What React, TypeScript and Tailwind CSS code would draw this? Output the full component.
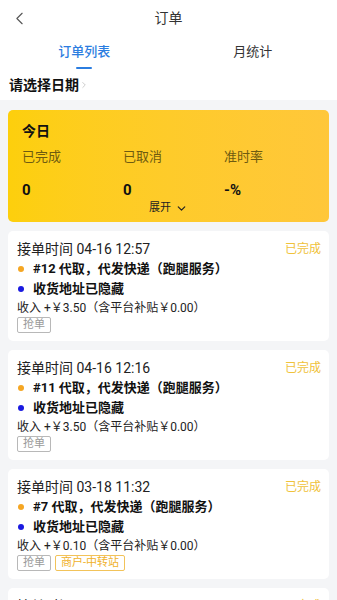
import { ChevronLeft, ChevronRight, ChevronDown } from "lucide-react";

interface Order {
  time: string;
  no: string;
  income: string;
  tags: { label: string; tone: "gray" | "amber" }[];
}

const orders: Order[] = [
  { time: "04-16 12:57", no: "#12", income: "3.50", tags: [{ label: "抢单", tone: "gray" }] },
  { time: "04-16 12:16", no: "#11", income: "3.50", tags: [{ label: "抢单", tone: "gray" }] },
  {
    time: "03-18 11:32",
    no: "#7",
    income: "0.10",
    tags: [
      { label: "抢单", tone: "gray" },
      { label: "商户-中转站", tone: "amber" },
    ],
  },
  { time: "03-18 10:05", no: "#6", income: "3.50", tags: [{ label: "抢单", tone: "gray" }] },
];

const OrderCard = ({ order }: { order: Order }) => (
  <div className="bg-white rounded-[5px] pl-[9px] pr-[8px] pt-[9px] pb-[8px]">
    <div className="flex items-center justify-between h-[18px]">
      <span className="text-[14px] text-[#222]">接单时间 {order.time}</span>
      <span className="text-[12px] text-[#f0c23a]">已完成</span>
    </div>
    <div className="flex items-center h-[20px] mt-[1px]">
      <span className="w-[6px] h-[6px] rounded-full bg-[#f5a623] ml-[1px] mr-[9px]" />
      <span className="text-[13px] font-bold text-[#111]">{order.no} 代取，代发快递（跑腿服务）</span>
    </div>
    <div className="flex items-center h-[20px]">
      <span className="w-[6px] h-[6px] rounded-full bg-[#1a1ae0] ml-[1px] mr-[9px]" />
      <span className="text-[13px] font-bold text-[#111]">收货地址已隐藏</span>
    </div>
    <div className="text-[12px] text-[#222] h-[18px] flex items-center">
      收入 +￥{order.income}（含平台补贴￥0.00）
    </div>
    <div className="flex gap-[4px]">
      {order.tags.map((tag) => (
        <span
          key={tag.label}
          className={
            tag.tone === "gray"
              ? "h-[16px] px-[5px] border border-[#b8b8b8] rounded-[2px] text-[11px] leading-[14px] text-[#9a9a9a]"
              : "h-[16px] px-[5px] border border-[#f2c35a] rounded-[2px] text-[11px] leading-[14px] text-[#f0b12a]"
          }
        >
          {tag.label}
        </span>
      ))}
    </div>
  </div>
);

export default function App() {
  return (
    <div
      className="w-[337px] h-[600px] overflow-hidden bg-[#f4f5f7]"
      style={{ fontFamily: 'Roboto, "Noto Sans CJK SC", sans-serif' }}
    >
      {/* header */}
      <div className="bg-white">
        <div className="relative h-[36px] flex items-center justify-center">
          <ChevronLeft className="absolute left-[9px] top-[8px] w-[21px] h-[21px] text-[#555]" strokeWidth={1.3} />
          <span className="text-[14px] text-[#333]">订单</span>
        </div>
        <div className="grid grid-cols-2 h-[36px]">
          <div className="flex flex-col items-center pt-[7px]">
            <span className="text-[13px] font-medium text-[#2b7de0] leading-[18px]">订单列表</span>
            <span className="mt-[6px] w-[16px] h-[2px] rounded-full bg-[#2b7de0]" />
          </div>
          <div className="flex flex-col items-center pt-[7px]">
            <span className="text-[13px] text-[#333] leading-[18px]">月统计</span>
          </div>
        </div>
        <div className="h-[28px] flex items-center pl-[9px] pb-[2px]">
          <span className="text-[14px] font-bold text-[#111]">请选择日期</span>
          <ChevronRight className="w-[10px] h-[10px] text-[#c4c4c4]" strokeWidth={2} />
        </div>
      </div>

      {/* content */}
      <div className="px-[8px] pt-[10px] flex flex-col gap-[9px]">
        <div className="rounded-[5px] bg-gradient-to-r from-[#fdcf0c] to-[#ffc73a] pl-[14px] pr-[4px] pt-[12px] h-[112px]">
          <div className="text-[14px] font-bold text-[#111] leading-[18px]">今日</div>
          <div className="grid grid-cols-[101px_101px_1fr] mt-[8px]">
            <span className="text-[13px] text-[#6e5b10] leading-[18px]">已完成</span>
            <span className="text-[13px] text-[#6e5b10] leading-[18px]">已取消</span>
            <span className="text-[13px] text-[#6e5b10] leading-[18px]">准时率</span>
          </div>
          <div className="grid grid-cols-[101px_101px_1fr] mt-[15px]">
            <span className="text-[15px] font-bold text-[#111] leading-[18px]">0</span>
            <span className="text-[15px] font-bold text-[#111] leading-[18px]">0</span>
            <span className="text-[15px] font-bold text-[#111] leading-[18px]">-%</span>
          </div>
          <div className="flex items-center justify-center gap-[4px] pr-[10px] mt-[2px]">
            <span className="text-[11px] text-[#222] leading-[14px]">展开</span>
            <ChevronDown className="w-[13px] h-[13px] text-[#222]" strokeWidth={2.2} />
          </div>
        </div>

        {orders.map((o) => (
          <OrderCard key={o.no} order={o} />
        ))}
      </div>
    </div>
  );
}
